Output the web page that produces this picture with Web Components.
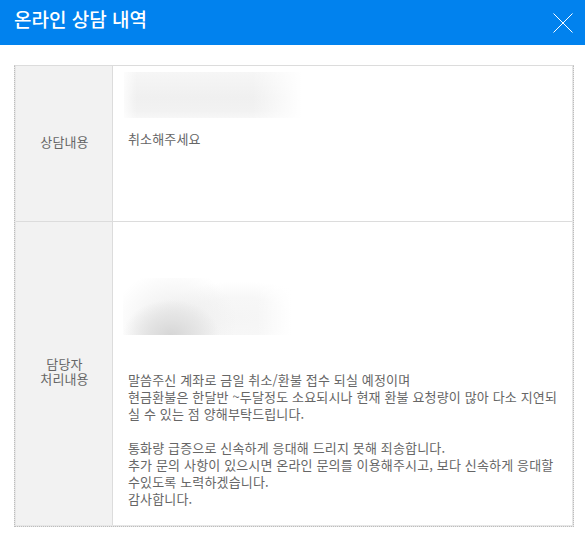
<!DOCTYPE html>
<html lang="ko">
<head>
<meta charset="utf-8">
<title>온라인 상담 내역</title>
<style>
  html, body { margin: 0; padding: 0; background: #fff; }
  body { font-family: "Noto Sans CJK KR", "Liberation Sans", sans-serif; width: 585px; overflow: hidden; }
</style>
</head>
<body>
<consult-header>온라인 상담 내역</consult-header>
<consult-table>
  <consult-row label="상담내용" style="--row-height: 155px">
    <blur-patch style="--w: 178px; --h: 46px; --fill: linear-gradient(90deg, rgba(255,255,255,.75), rgba(255,255,255,0) 7%, rgba(255,255,255,0) 72%, #fff 100%), linear-gradient(#f6f6f6, #f0f0f0 55%, #f2f2f2 85%, #f7f7f7)"></blur-patch>
    <p class="first">취소해주세요</p>
  </consult-row>
  <consult-row label="담당자&#10;처리내용" style="--row-height: 303px">
    <div class="spacer"></div>
    <blur-patch style="--w: 172px; --h: 57px; --x: -1px; --fill: linear-gradient(90deg, rgba(255,255,255,0) 78%, #fff 98%), radial-gradient(ellipse 28% 62% at 28% 100%, #d6d6d6 0%, #e2e2e2 45%, rgba(255,255,255,0) 100%), radial-gradient(ellipse 36% 90% at 30% 75%, #ececec 0%, rgba(255,255,255,0) 100%), radial-gradient(ellipse 50% 62% at 68% 68%, #f5f5f5 0%, #f7f7f7 55%, rgba(255,255,255,0) 100%)"></blur-patch>
    <p class="answer">말씀주신 계좌로 금일 취소/환불 접수 되실 예정이며
현금환불은 한달반 ~두달정도 소요되시나 현재 환불 요청량이 많아 다소 지연되
실 수 있는 점 양해부탁드립니다.

통화량 급증으로 신속하게 응대해 드리지 못해 죄송합니다.
추가 문의 사항이 있으시면 온라인 문의를 이용해주시고, 보다 신속하게 응대할
수있도록 노력하겠습니다.
감사합니다.</p>
  </consult-row>
</consult-table>

<script>
class ConsultHeader extends HTMLElement {
  constructor() {
    super();
    this.attachShadow({ mode: 'open' });
    this.shadowRoot.innerHTML = `
      <style>
        :host {
          display: flex;
          align-items: center;
          justify-content: space-between;
          height: 45px;
          padding: 0 12px 0 14px;
          background: #0182ee;
          color: #fff;
        }
        h1 { margin: 0; font-size: 19px; font-weight: 500; line-height: 1; position: relative; top: -4px; }
        svg { display: block; width: 20px; height: 20px; }
      </style>
      <h1><slot></slot></h1>
      <svg viewBox="0 0 20 20" aria-label="닫기">
        <path d="M0.5 0.5 L19.5 19.5 M19.5 0.5 L0.5 19.5" stroke="#fff" stroke-width="1" fill="none"/>
      </svg>
    `;
  }
}

class ConsultTable extends HTMLElement {
  constructor() {
    super();
    this.attachShadow({ mode: 'open' });
    this.shadowRoot.innerHTML = `
      <style>
        :host {
          display: block;
          width: 560px;
          box-sizing: border-box;
          margin: 20px 0 0 14px;
          padding: 0 1px 1px;
          background: #e6e6e6;
          border-top: 1px solid #dcdcdc;
          border-left: 1px dotted #bdbdbd;
          border-right: 1px dotted #bdbdbd;
          border-bottom: 1px dotted #bdbdbd;
        }
      </style>
      <slot></slot>
    `;
  }
}

class ConsultRow extends HTMLElement {
  constructor() {
    super();
    this.attachShadow({ mode: 'open' });
    this.shadowRoot.innerHTML = `
      <style>
        :host {
          display: grid;
          grid-template-columns: 97px 1fr;
          height: var(--row-height);
          background: #fff;
          color: #666;
          font-size: 13px;
          letter-spacing: 0.15px;
          line-height: 17px;
        }
        :host(:not(:last-child)) { border-bottom: 1px solid #dcdcdc; }
        .label {
          display: flex;
          align-items: center;
          justify-content: center;
          box-sizing: border-box;
          padding: 0 0 5px 1px;
          background: #f2f2f2;
          border-right: 1px solid #dcdcdc;
          text-align: center;
          white-space: pre-line;
          line-height: 15px;
        }
        .body { padding: 6px 10px 0 11px; }
        ::slotted(p) { margin: 0; white-space: pre-wrap; padding-left: 4px; }
        ::slotted(p.first) { margin-top: 12px; }
        ::slotted(p.answer) { margin-top: 36px; }
        ::slotted(.spacer) { height: 50px; }
      </style>
      <div class="label"></div>
      <div class="body"><slot></slot></div>
    `;
  }

  connectedCallback() {
    this.shadowRoot.querySelector('.label').textContent = this.getAttribute('label');
  }
}

class BlurPatch extends HTMLElement {
  constructor() {
    super();
    this.attachShadow({ mode: 'open' });
    this.shadowRoot.innerHTML = `
      <style>
        :host {
          display: block;
          width: var(--w);
          height: var(--h);
          margin-left: var(--x, 0);
          overflow: hidden;
        }
        div { width: 100%; height: 100%; background: var(--fill); }
      </style>
      <div></div>
    `;
  }
}

customElements.define('consult-header', ConsultHeader);
customElements.define('consult-table', ConsultTable);
customElements.define('consult-row', ConsultRow);
customElements.define('blur-patch', BlurPatch);
</script>
</body>
</html>
